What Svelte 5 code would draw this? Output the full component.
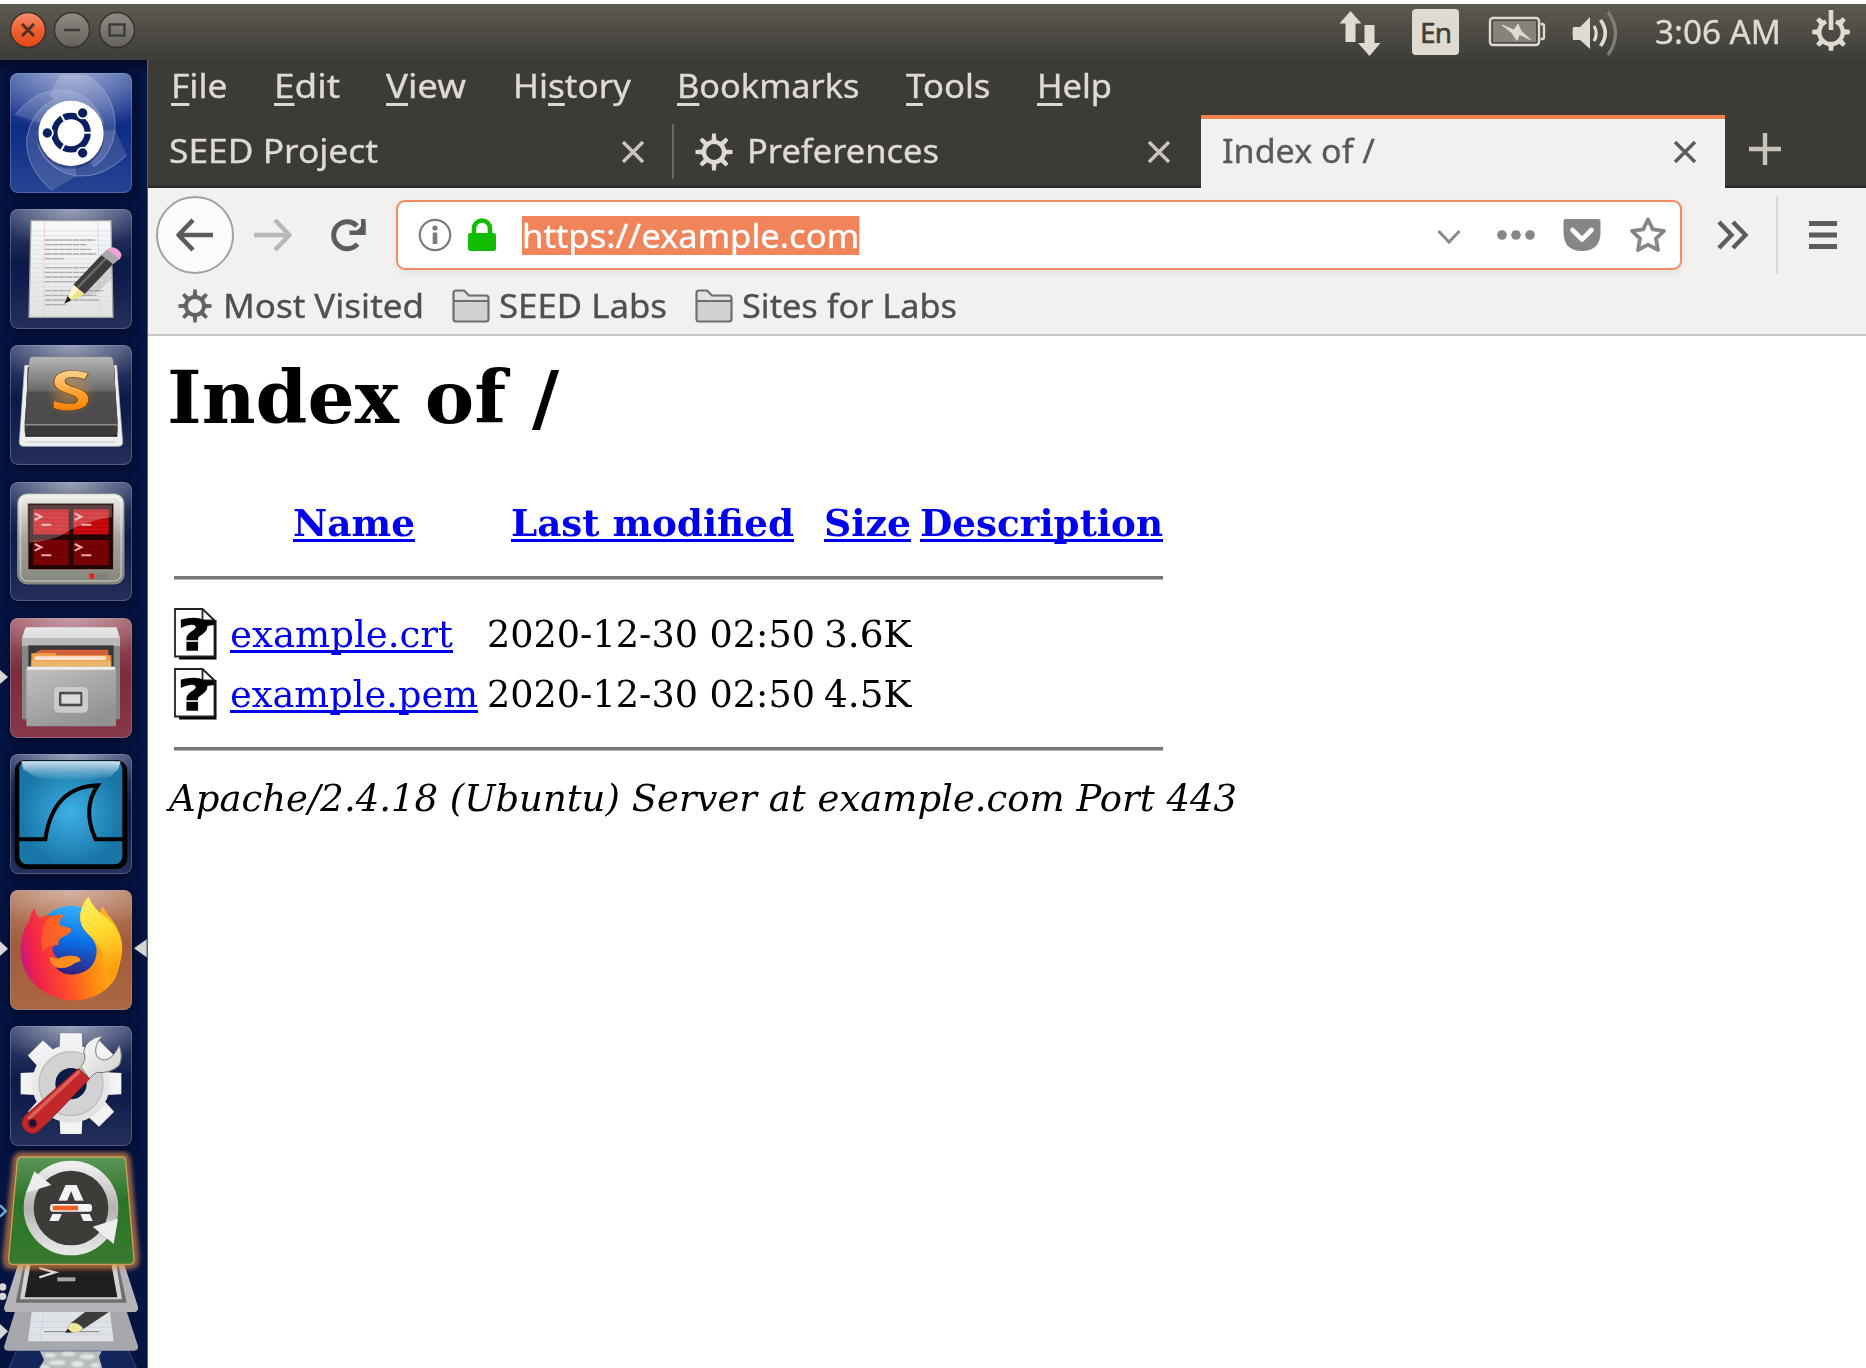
<script>
  // Stretches a label horizontally so that it takes the given width.
  function fit(node, width) {
    const natural = node.getBoundingClientRect().width;
    node.style.transform = `scaleX(${width / natural})`;
    node.style.marginRight = `${width - natural}px`;
  }

  const menus = [
    { pre: '', key: 'F', post: 'ile', w: 56.5 },
    { pre: '', key: 'E', post: 'dit', w: 66 },
    { pre: '', key: 'V', post: 'iew', w: 80 },
    { pre: 'Hi', key: 's', post: 'tory', w: 118 },
    { pre: '', key: 'B', post: 'ookmarks', w: 182.5 },
    { pre: '', key: 'T', post: 'ools', w: 84.5 },
    { pre: '', key: 'H', post: 'elp', w: 75 }
  ];
  const files = [
    { name: 'example.crt', w: 223, date: '2020-12-30 02:50', size: '3.6K' },
    { name: 'example.pem', w: 248, date: '2020-12-30 02:50', size: '4.5K' }
  ];
  const teeth = [0, 45, 90, 135, 180, 225, 270, 315];
  const paperLines = [
    [135, 285, 541], [135, 259, 555], [135, 273, 569], [135, 288, 583], [135, 192, 597],
    [135, 285, 624], [135, 270, 638], [135, 262, 652], [135, 240, 666],
    [135, 310, 693], [135, 290, 707], [135, 296, 721], [135, 200, 735]
  ];
  const panes = [
    { x: 100, y: 522, hot: true }, { x: 220, y: 522, hot: true },
    { x: 100, y: 614, hot: false }, { x: 220, y: 614, hot: false }
  ];
</script>

{#snippet gear(size)}
  <svg class="gear" width={size} height={size} viewBox="-20 -20 40 40">
    <circle r="10.6" fill="none" stroke="currentColor" stroke-width="4.6" />
    {#each teeth as a}
      <path d="M-2.6-11.5L-2-19.5H2L2.6-11.5Z" fill="currentColor" transform="rotate({a})" />
    {/each}
  </svg>
{/snippet}

{#snippet cross()}
  <svg class="cross" width="24" height="24" viewBox="0 0 24 24">
    <path d="M2 2L22 22M22 2L2 22" stroke="currentColor" stroke-width="3.4" />
  </svg>
{/snippet}

{#snippet folder()}
  <svg width="38" height="34" viewBox="0 0 38 34">
    <path d="M1.5 30V4Q1.5 1.5 4 1.5H12L17 6.5H34Q36.500 6.500 36.500 9V30Q36.500 32.500 34 32.500H4Q1.500 32.500 1.500 30Z" fill="#d2d1cf" stroke="#6f6f6e" stroke-width="2.2" />
    <path d="M2 12H36" stroke="#6f6f6e" stroke-width="2" />
    <path d="M3 3H11.500L16.500 8H35V10.800H3Z" fill="#e4e3e1" />
  </svg>
{/snippet}

<div class="screen">
  <header class="panel">
    <div class="controls">
      <svg width="36" height="38" viewBox="-18 -19 36 38">
        <circle r="17.500" fill="url(#closeG)" stroke="#37342f" stroke-width="1.500" />
        <path d="M-6-6L6 6M6-6L-6 6" stroke="#4c3024" stroke-width="3" />
      </svg>
      <svg width="36" height="38" viewBox="-18 -19 36 38">
        <circle r="17.500" fill="url(#btnG)" stroke="#37342f" stroke-width="1.500" />
        <path d="M-8 0H8" stroke="#3c3b37" stroke-width="2.400" />
      </svg>
      <svg width="36" height="38" viewBox="-18 -19 36 38">
        <circle r="17.500" fill="url(#btnG)" stroke="#37342f" stroke-width="1.500" />
        <rect x="-7.500" y="-5.500" width="15" height="11" fill="none" stroke="#3c3b37" stroke-width="2.400" />
      </svg>
    </div>
    <div class="tray">
      <svg class="net" width="42" height="48" viewBox="0 -3 42 48">
        <path d="M11.500 0L22.500 12.500H16.500V31H6.500V12.500H0.500ZM30.500 45L19 32H25.500V14H35.500V32H41.500Z" fill="#dfdbd2" />
      </svg>
      <span class="lang">En</span>
      <svg class="battery" width="58" height="34" viewBox="0 0 58 34">
        <rect x="2" y="3" width="49" height="27" rx="3" fill="#4a4843" stroke="#dfdbd2" stroke-width="2.400" />
        <path d="M52.500 9H54Q56 9 56 11V22Q56 24 54 24H52.500" fill="none" stroke="#dfdbd2" stroke-width="2.400" />
        <rect x="5" y="6" width="43" height="21" fill="#85837c" />
        <path d="M14 10L26 15L30 9L33 16L43 25L31.500 19.500L29 25.500L24 18Z" fill="#dfdbd2" stroke="#dfdbd2" stroke-width="0.800" />
      </svg>
      <svg class="volume" width="48" height="48" viewBox="0 0 48 48">
        <path d="M1 18H8L18 8V40L8 31H1Q0 24 1 18Z" fill="#dfdbd2" />
        <path d="M22 17Q26.500 24 22 32" fill="none" stroke="#dfdbd2" stroke-width="3.200" />
        <path d="M28.500 11Q38 24 28.500 37" fill="none" stroke="#dfdbd2" stroke-width="3.600" />
        <path d="M36 3Q51 24 36 46" fill="none" stroke="#807d76" stroke-width="3.200" />
      </svg>
      <span class="clock" use:fit={126}>3:06 AM</span>
      <svg class="session" width="38" height="46" viewBox="-19 -23 38 46">
        <path d="M-5-10.500A11.800 11.800 0 1 0 5-10.500" fill="none" stroke="#dfdbd2" stroke-width="4.400" />
        <path d="M0-22V-2" stroke="#dfdbd2" stroke-width="4.600" />
        {#each [45, 90, 135, 180, 225, 270, 315] as a}
          <path d="M-2.800-12.500L-2.200-18.800H2.200L2.800-12.500Z" fill="#dfdbd2" transform="rotate({a})" />
        {/each}
      </svg>
    </div>
  </header>

  <div class="desktop">
    <nav class="launcher">
      <div class="tile dash">
        <svg viewBox="30 39 366 360">
          <path d="M45 165Q110 85 190 90Q275 95 310 190L212 218Z" fill="#fff" opacity=".14" />
          <path d="M260 45Q350 100 345 210Q335 290 280 320L212 218L150 100L180 45Z" fill="#fff" opacity=".16" />
          <path d="M380 285Q310 355 230 348Q140 335 110 250L212 218L345 210Z" fill="#fff" opacity=".13" />
          <path d="M155 392Q75 320 80 235Q95 150 160 120L212 218L230 348Z" fill="#fff" opacity=".14" />
          <path d="M45 165Q110 85 190 90Q275 95 310 190M260 45Q350 100 345 210M380 285Q310 355 230 348Q150 335 115 260M155 392Q75 320 80 235Q95 150 160 120M345 210Q335 290 280 320" fill="none" stroke="#a9b9e6" stroke-width="2.500" opacity=".6" />
          <circle cx="213" cy="226" r="100" fill="#04123e" opacity=".35" />
          <circle cx="213" cy="220" r="98" fill="#fff" />
          <circle cx="213" cy="218" r="50" fill="none" stroke="#0a1f60" stroke-width="19" />
          <path d="M236 218H278M201 197L181 160M201 239L181 276" stroke="#fff" stroke-width="6" />
          <g fill="#0a1f60" stroke="#fff" stroke-width="5">
            <circle cx="142" cy="219" r="16.500" /><circle cx="248" cy="159" r="16.500" /><circle cx="248" cy="279" r="16.500" />
          </g>
        </svg>
      </div>

      <div class="tile">
        <svg viewBox="30 448 366 360">
          <path d="M93 483H333L339 773H87Z" fill="url(#paperG)" stroke="#a3a3a0" stroke-width="4" />
          {#each Array(17) as _, i}
            <path d="M96 {514 + i * 14}H333" stroke="#d3e0ea" stroke-width="2" />
          {/each}
          <path d="M133 487L131 769" stroke="#f2c6c6" stroke-width="2.500" />
          <path d="M294 487L299 769" stroke="#c6daef" stroke-width="2.500" />
          {#each paperLines as [x1, x2, y]}
            <path d="M{x1} {y}H{x2}" stroke="#acacaa" stroke-width="4" stroke-dasharray="19 2" />
          {/each}
          <path d="M235 715L335 610L333 660L290 700Z" fill="#777" opacity=".22" />
          <path d="M220 675L305 585L340 612L254 703Z" fill="#3d3d3d" />
          <path d="M233 684L318 596" stroke="#6c6c6c" stroke-width="7" />
          <path d="M304 586L322 568L358 598L340 614Z" fill="#a9a9a9" />
          <path d="M322 568Q338 556 355 570Q372 586 358 600Z" fill="#eda3d6" />
          <path d="M220 675L254 703L233 715L194 731L207 707Z" fill="#ebe08e" />
          <path d="M220 675L236 690L205 722L207 707Z" fill="#fbf7cd" />
          <path d="M203 709L214 722L193 732Z" fill="#1d1d1d" />
        </svg>
      </div>

      <div class="tile">
        <svg viewBox="30 31 366 360">
          <path d="M74 92H350L368 322Q368 335 355 335H72Q58 335 58 322Z" fill="#efefef" stroke="#bdbdbd" stroke-width="2" />
          <path d="M83 98H343L352 306H76Z" fill="#151515" />
          <path d="M98 66H328Q338 66 340 78L353 266V290Q353 303 340 303H86Q74 303 74 290V266L88 78Q89 66 98 66Z" fill="#3a3a3a" />
          <path d="M98 66H328Q338 66 340 78L353 266H74L88 78Q89 66 98 66Z" fill="url(#keyG)" />
          <path d="M76 270H351" stroke="#8d8d8d" stroke-width="5" />
          <path d="M80 322H346" stroke="#d5d5d5" stroke-width="4" />
          <ellipse cx="212" cy="172" rx="76" ry="70" fill="url(#glowG)" />
          <text x="149" y="227" textLength="126" lengthAdjust="spacingAndGlyphs" class="sublime-s">S</text>
        </svg>
      </div>

      <div class="tile">
        <svg viewBox="30 440 366 360">
          <rect x="53" y="480" width="320" height="270" rx="30" fill="#111936" opacity=".6" />
          <rect x="53" y="475" width="319" height="271" rx="28" fill="url(#monG)" stroke="#8d8e88" stroke-width="3" />
          <rect x="62" y="484" width="301" height="253" rx="20" fill="none" stroke="#fff" stroke-width="3" opacity=".6" />
          <rect x="84" y="505" width="256" height="198" fill="#240303" stroke="#97827d" stroke-width="2.500" />
          {#each panes as p}
            <rect x={p.x} y={p.y} width="106" height="75" fill={p.hot ? '#cf0a0e' : '#7a0205'} />
            {#each Array(6) as _, i}
              <path d="M{p.x} {p.y + 7 + i * 12}h106" stroke="#3c0000" stroke-width="2.500" opacity=".35" />
            {/each}
            <path d="M{p.x + 4} {p.y + 12}l20 10l-20 10M{p.x + 24} {p.y + 46}h30" fill="none" stroke="#f0a9ab" stroke-width="6" />
          {/each}
          <path d="M88 508H336V545Q240 560 185 600Q140 620 88 622Z" fill="#fff" opacity=".25" />
          <rect x="268" y="715" width="15" height="15" fill="#e8201c" />
          <rect x="289" y="712" width="34" height="21" rx="6" fill="#777872" opacity=".5" />
        </svg>
      </div>

      <div class="tile files">
        <svg viewBox="30 38 366 360">
          <path d="M66 98H360V342H66Z" fill="#868686" />
          <path d="M81 66H345Q350 66 351 70L360 98V120H66V98L75 70Q76 66 81 66Z" fill="url(#topG)" />
          <path d="M66 98H360V122H66Z" fill="#b9b9b9" />
          <rect x="85" y="120" width="256" height="64" fill="#3a3937" />
          <path d="M108 140L122 133H325V150H335V184H100Z" fill="#d2603a" />
          <path d="M94 144H165L172 150H331V184H94Z" fill="#f0a24a" />
          <path d="M104 153H318V164H104Z" fill="#fbe3d2" />
          <path d="M94 168H333V184H94Z" fill="#eab56c" />
          <path d="M79 192Q79 184 87 184H340Q348 184 348 192V363H79Z" fill="url(#drawG)" />
          <path d="M82 189H345" stroke="#eee" stroke-width="9" />
          <rect x="162" y="245" width="102" height="77" rx="14" fill="#cbcbcb" />
          <rect x="177" y="259" width="70" height="44" rx="4" fill="#4b4b4b" />
          <rect x="184" y="267" width="57" height="28" fill="#dcdcdc" />
        </svg>
      </div>

      <div class="tile">
        <svg viewBox="30 446 366 360">
          <rect x="44" y="464" width="338" height="327" rx="34" fill="#000" />
          <rect x="58" y="466" width="309" height="311" rx="24" fill="url(#sharkG)" />
          <path d="M64 468H362L355 492L330 514Q212 530 108 516L70 492Z" fill="url(#shineG)" />
          <path d="M57 702H136Q158 545 293 540Q245 610 287 702H370" fill="none" stroke="#000" stroke-width="12" />
        </svg>
      </div>

      <div class="tile firefox">
        <svg viewBox="30 30 366 360">
          <circle cx="213" cy="181" r="104" fill="url(#globeG)" />
          <path d="M62 200Q66 150 88 122Q90 100 103 86Q107 106 120 113Q140 104 157 108Q174 102 193 105Q181 115 177 124L181 138Q205 140 214 150Q213 160 183 173Q171 184 176 195Q160 195 157 206Q158 226 177 236Q195 225 222 228Q240 230 242 242Q225 247 212 257Q188 269 166 261Q184 285 220 284Q285 276 290 215Q290 185 262 160Q228 124 247 80Q252 62 266 50Q276 78 300 98Q303 88 308 80Q318 98 336 120Q366 157 367 210Q362 255 345 296Q310 350 240 361Q160 366 105 314Q60 270 62 200Z" fill="url(#foxG)" />
          <path d="M266 50Q276 78 300 98Q350 130 366 190Q367 250 335 305Q318 265 308 240Q312 214 288 190Q284 178 262 160Q228 124 247 80Q252 62 266 50Z" fill="url(#tailG)" />
          <path d="M140 118Q165 102 193 105Q181 115 177 124L181 138Q205 140 214 150Q213 160 183 173Q171 184 176 195Q150 190 128 215Q118 160 140 118Z" fill="#fb7420" opacity=".55" />
          <path d="M177 236Q195 225 222 228Q240 230 242 242Q225 247 212 257Q188 269 166 261Q150 250 148 232Z" fill="#ffa01c" opacity=".75" />
        </svg>
      </div>

      <div class="tile">
        <svg viewBox="30 438 366 360">
          <g fill="url(#cogG)">
            {#each teeth as a}
              <path d="M178 520L181 460H245L248 520Z" transform="rotate({a} 213 611)" />
            {/each}
            <circle cx="213" cy="611" r="117" />
          </g>
          <circle cx="213" cy="611" r="96" fill="#d2d2d2" stroke="#bcbcbc" stroke-width="4" />
          <circle cx="213" cy="611" r="47" fill="#0b1a45" />
          <path d="M242 560Q262 540 251 514Q258 476 308 467Q280 496 289 526Q302 546 325 537Q344 527 358 495Q370 530 358 556Q330 582 290 577Q280 582 268 596Z" fill="url(#steelG)" stroke="#777a75" stroke-width="3" />
          <path d="M236 565L269 596Q190 680 118 752Q96 771 74 750Q56 728 76 706Z" fill="#c2272a" stroke="#851416" stroke-width="2" />
          <path d="M236 576L88 714" stroke="#e36f67" stroke-width="11" stroke-linecap="round" opacity=".8" />
          <circle cx="98" cy="730" r="13" fill="#1b1437" stroke="#8d1b20" stroke-width="5" />
        </svg>
      </div>

      <svg class="stack" viewBox="0 30 441 654">
        <path d="M50 630H385L412 690H25Z" fill="#13265c" stroke="#4c5f95" stroke-width="2" />
        <path d="M120 634H305L297 650L308 690H115L132 660Z" fill="#b4bbba" />
        <g class="crumple" fill="#e3e7e5">
          <ellipse cx="150" cy="646" rx="18" ry="7" /><ellipse cx="205" cy="642" rx="22" ry="6" />
          <ellipse cx="262" cy="650" rx="24" ry="8" /><ellipse cx="172" cy="668" rx="26" ry="8" />
          <ellipse cx="232" cy="672" rx="20" ry="9" /><ellipse cx="285" cy="676" rx="14" ry="7" />
          <ellipse cx="135" cy="682" rx="14" ry="6" />
        </g>
        <path d="M45 514H380L414 618Q416 632 402 632H24Q10 632 13 618Z" fill="#a7a7ae" />
        <path d="M95 516H330L341 604H84Z" fill="#dfe2e6" />
        <path d="M131 518L121 602M98 545H330M94 562H334M90 584H338" stroke="#c8d2df" stroke-width="2.500" />
        <path d="M132 575H298" stroke="#858585" stroke-width="3" />
        <path d="M212 550L258 514H330L250 567L236 576L196 578Z" fill="#3c3c3c" />
        <path d="M212 550Q235 545 250 566L236 576L196 578Z" fill="#eee69a" />
        <path d="M196 578L203 566L216 577Z" fill="#222" />
        <path d="M55 370H372L414 500Q416 516 402 516H24Q10 516 13 500Z" fill="#b4b4b8" />
        <path d="M72 370H355L380 488H47Z" fill="#6f6f71" />
        <path d="M78 370H348L366 478H60Z" fill="#d2d2d2" />
        <path d="M92 372H334L352 472H74Z" fill="#1f1f20" />
        <path d="M118 384L165 397L118 412" fill="none" stroke="#dcdcdc" stroke-width="7" />
        <path d="M172 418H226" stroke="#a5a5a5" stroke-width="12" />
        <path d="M64 48H368Q378 48 380 60L406 355Q407 376 392 376H32Q18 376 19 355L50 60Q53 48 64 48Z" fill="none" stroke="#e08a4a" stroke-width="24" opacity=".65" class="soft" />
        <path d="M64 51H366Q375 51 377 62L402 355Q403 373 390 373H38Q25 373 26 355L52 62Q55 51 64 51Z" fill="url(#greenG)" stroke="#cda053" stroke-width="4" />
        <circle cx="213" cy="203" r="114" fill="#3d3c39" />
        <circle cx="213" cy="204" r="127" fill="none" stroke="url(#ringG)" stroke-width="30" />
        <path d="M103 94L154 135L78 158Z" fill="#ededed" />
        <path d="M354 236L341 312L278 260Z" fill="#ededed" />
        <text x="143" y="242" textLength="140" lengthAdjust="spacingAndGlyphs" class="updater-a">A</text>
        <rect x="150" y="182" width="126" height="40" fill="#3d3c39" />
        <rect x="150" y="192" width="126" height="23" rx="9" fill="#f4f4f4" />
        <rect x="158" y="197" width="76" height="14" fill="#ee6022" />
      </svg>

      <svg class="pips" viewBox="0 0 441 3924">
        <g fill="#d6d6d6">
          <path d="M0 1830L24 1851L0 1872Z" /><path d="M0 2644L24 2666L0 2688Z" />
          <path d="M440 2638V2692L402 2665Z" />
          <circle cx="8" cy="3681" r="11" /><circle cx="8" cy="3709" r="11" />
          <path d="M0 3792L24 3814L0 3838Z" />
        </g>
        <path d="M0 3436L17 3453L0 3470" fill="none" stroke="#6fb2dc" stroke-width="7" />
      </svg>
    </nav>

    <main class="window">
      <div class="menubar">
        {#each menus as m}
          <span class="label" use:fit={m.w}>{m.pre}<u>{m.key}</u>{m.post}</span>
        {/each}
      </div>

      <div class="tabs">
        <div class="tab first">
          <span class="label grow"><span use:fit={209}>SEED Project</span></span>
          {@render cross()}
        </div>
        <div class="tab second">
          {@render gear(38)}
          <span class="label grow"><span use:fit={192}>Preferences</span></span>
          {@render cross()}
        </div>
        <div class="tab active">
          <span class="label grow"><span use:fit={153}>Index of /</span></span>
          {@render cross()}
        </div>
        <svg class="plus" width="34" height="34" viewBox="0 0 34 34">
          <path d="M1 17H33M17 1V33" stroke="#c9c4bb" stroke-width="4.400" />
        </svg>
      </div>

      <div class="toolbar">
        <span class="back">
          <svg width="40" height="34" viewBox="0 0 40 34">
            <path d="M38 17H4M18 2L3.500 17L18 32" fill="none" stroke="#5c5c5b" stroke-width="4.600" stroke-linejoin="round" />
          </svg>
        </span>
        <svg class="forward" width="40" height="34" viewBox="0 0 40 34">
          <path d="M1 17H36M22 2L36.500 17L22 32" fill="none" stroke="#b9b8b6" stroke-width="4.600" stroke-linejoin="round" />
        </svg>
        <svg class="reload" width="38" height="36" viewBox="0 0 38 36">
          <path d="M28 9A13.500 13.500 0 1 0 28.500 27" fill="none" stroke="#5c5c5b" stroke-width="5" />
          <path d="M36.500 2V18H20.500V13.500H32V2Z" fill="#5c5c5b" />
          <path d="M36.500 5V18H23.500Z" fill="#5c5c5b" />
        </svg>
        <div class="urlbar">
          <svg class="info" width="34" height="34" viewBox="0 0 34 34">
            <circle cx="17" cy="17" r="15.200" fill="none" stroke="#7a7a79" stroke-width="2.200" />
            <circle cx="17" cy="10" r="2.600" fill="#7a7a79" />
            <path d="M17 14.500V26" stroke="#7a7a79" stroke-width="4.600" />
          </svg>
          <svg class="lock" width="30" height="34" viewBox="0 0 30 34">
            <path d="M7 16V10.500A8 8 0 0 1 23 10.500V16" fill="none" stroke="#12bc00" stroke-width="4.600" />
            <rect x="1" y="15" width="28" height="18" rx="2.500" fill="#12bc00" />
          </svg>
          <span class="address"><span use:fit={337}>https://example.com</span></span>
          <svg class="chev" width="24" height="16" viewBox="0 0 24 16">
            <path d="M1.500 2L12 13L22.500 2" fill="none" stroke="#8a8a89" stroke-width="3" />
          </svg>
          <svg class="dots" width="40" height="12" viewBox="0 0 40 12">
            <circle cx="6" cy="6" r="4.800" /><circle cx="20" cy="6" r="4.800" /><circle cx="34" cy="6" r="4.800" />
          </svg>
          <svg class="pocket" width="38" height="34" viewBox="0 0 38 34">
            <path d="M3 1H35Q37.500 1 37.500 4V14Q37.500 33 19 33Q0.500 33 0.500 14V4Q0.500 1 3 1Z" fill="#868685" />
            <path d="M9.500 12L19 21.500L28.500 12" fill="none" stroke="#fff" stroke-width="4.600" stroke-linecap="round" stroke-linejoin="round" />
          </svg>
          <svg class="star" width="38" height="38" viewBox="0 0 38 38">
            <path d="M19 3.500L23.800 13.300L35 14.900L27 22.600L29 34L19 28.600L9 34L11 22.600L3 14.900L14.200 13.300Z" fill="none" stroke="#868685" stroke-width="3.800" stroke-linejoin="round" />
          </svg>
        </div>
        <svg class="more" width="32" height="30" viewBox="0 0 32 30">
          <path d="M2 2L14.500 15L2 28M16 2L28.500 15L16 28" fill="none" stroke="#5c5c5b" stroke-width="4.400" />
        </svg>
        <i class="divider"></i>
        <svg class="burger" width="28" height="30" viewBox="0 0 28 30">
          <path d="M0 3.500H28M0 15H28M0 26.500H28" stroke="#5c5c5b" stroke-width="4.800" />
        </svg>
      </div>

      <div class="bookmarks">
        <span class="mark gearmark">{@render gear(34)}<span class="label" use:fit={201}>Most Visited</span></span>
        <span class="mark">{@render folder()}<span class="label" use:fit={168}>SEED Labs</span></span>
        <span class="mark">{@render folder()}<span class="label" use:fit={215}>Sites for Labs</span></span>
      </div>

      <section class="page">
        <h1><span use:fit={392}>Index of /</span></h1>
        <div class="row head">
          <span></span>
          <span class="mid"><a href="#name" use:fit={122}>Name</a></span>
          <span class="mid modified"><a href="#date" use:fit={283}>Last modified</a></span>
          <span class="mid"><a href="#size" use:fit={87}>Size</a></span>
          <span class="mid"><a href="#desc" use:fit={243}>Description</a></span>
        </div>
        <hr />
        {#each files as f}
          <div class="row">
            <svg class="fileicon" width="43" height="52" viewBox="0 0 43 52">
              <path d="M5 48H39V12H42.500V51.500H5Z" fill="#000" />
              <path d="M1 1H28.500L40.500 12.500V48.500H1Z" fill="#fff" stroke="#222" stroke-width="1.800" />
              <path d="M28.500 1V12.500H40.500" fill="none" stroke="#222" stroke-width="1.800" />
              <text x="4" y="42" textLength="32" lengthAdjust="spacingAndGlyphs" class="unknown">?</text>
              <path d="M28 12.500H40V17L33 18L28 24Z" fill="#000" />
            </svg>
            <span><a href="#file" use:fit={f.w}>{f.name}</a></span>
            <span><span use:fit={328}>{f.date}</span></span>
            <span><span use:fit={87.5}>{f.size}</span></span>
            <span></span>
          </div>
        {/each}
        <hr class="second-rule" />
        <address><span use:fit={1068}>Apache/2.4.18 (Ubuntu) Server at example.com Port 443</span></address>
      </section>
    </main>
  </div>

  <svg class="defs" width="0" height="0">
    <defs>
      <linearGradient id="closeG" x2="0" y2="1"><stop offset="0" stop-color="#f58e6c" /><stop offset=".5" stop-color="#ee5f30" /><stop offset="1" stop-color="#df4a16" /></linearGradient>
      <linearGradient id="btnG" x2="0" y2="1"><stop offset="0" stop-color="#8e8c84" /><stop offset="1" stop-color="#64625b" /></linearGradient>
      <linearGradient id="paperG" x2="0" y2="1"><stop offset="0" stop-color="#f8f8f8" /><stop offset="1" stop-color="#e2e2e2" /></linearGradient>
      <linearGradient id="keyG" x2="0" y2="1"><stop offset="0" stop-color="#b6b6b6" /><stop offset=".5" stop-color="#6b6b6b" /><stop offset=".54" stop-color="#4e4e4e" /><stop offset="1" stop-color="#4b4b4b" /></linearGradient>
      <radialGradient id="glowG"><stop offset="0" stop-color="#e8983a" stop-opacity=".6" /><stop offset="1" stop-color="#e8983a" stop-opacity="0" /></radialGradient>
      <linearGradient id="sG" x2="0" y2="1"><stop offset="0.2" stop-color="#ffd9a0" /><stop offset=".55" stop-color="#ffa22f" /><stop offset=".8" stop-color="#ff8000" /></linearGradient>
      <linearGradient id="monG" x2="0" y2="1"><stop offset="0" stop-color="#f2f2f0" /><stop offset=".5" stop-color="#a2a39c" /><stop offset="1" stop-color="#85877f" /></linearGradient>
      <linearGradient id="topG" x2="0" y2="1"><stop offset="0" stop-color="#e8e8e8" /><stop offset="1" stop-color="#d2d2d2" /></linearGradient>
      <linearGradient id="drawG" x2=".6" y2="1"><stop offset="0" stop-color="#c2c2c2" /><stop offset="1" stop-color="#929292" /></linearGradient>
      <radialGradient id="sharkG"><stop offset="0" stop-color="#3db0e6" /><stop offset="1" stop-color="#1a76a8" /></radialGradient>
      <linearGradient id="shineG" x2="0" y2="1"><stop offset="0" stop-color="#e8eef2" stop-opacity=".9" /><stop offset="1" stop-color="#9fd0e8" stop-opacity=".1" /></linearGradient>
      <linearGradient id="globeG" x1=".6" y1="0" x2=".4" y2="1"><stop offset="0" stop-color="#35b0fb" /><stop offset=".5" stop-color="#0a6fe6" /><stop offset="1" stop-color="#331a78" /></linearGradient>
      <linearGradient id="foxG" x1="0" y1=".6" x2="1" y2=".4"><stop offset="0" stop-color="#c4168a" /><stop offset=".12" stop-color="#f0204c" /><stop offset=".38" stop-color="#ff4a2a" /><stop offset=".65" stop-color="#ff8a10" /><stop offset="1" stop-color="#ffc51c" /></linearGradient>
      <linearGradient id="tailG" x2=".2" y2="1"><stop offset="0" stop-color="#fff36a" /><stop offset=".5" stop-color="#ffd92e" /><stop offset="1" stop-color="#ff9a0a" /></linearGradient>
      <linearGradient id="cogG" gradientUnits="userSpaceOnUse" x1="213" y1="460" x2="213" y2="762"><stop offset="0" stop-color="#f4f4f4" /><stop offset="1" stop-color="#dedede" /></linearGradient>
      <linearGradient id="steelG" x2="1" y2="1"><stop offset="0" stop-color="#fbfbfa" /><stop offset="1" stop-color="#cfd0cc" /></linearGradient>
      <linearGradient id="greenG" x2="0" y2="1"><stop offset="0" stop-color="#5c9558" /><stop offset=".4" stop-color="#2c7429" /><stop offset="1" stop-color="#37792f" /></linearGradient>
      <linearGradient id="ringG" x2="0" y2="1"><stop offset="0" stop-color="#efefef" /><stop offset=".5" stop-color="#b5b3b1" /><stop offset="1" stop-color="#e6e6e6" /></linearGradient>
    </defs>
  </svg>
</div>

<style>
  :global(body) { background: #fff; }
  .screen {
    width: 1866px;
    height: 1368px;
    box-sizing: border-box;
    padding-top: 4px;
    overflow: hidden;
    display: flex;
    flex-direction: column;
    background: #fff;
    font-family: "Noto Sans", "Open Sans", sans-serif;
    font-size: 32px;
    white-space: nowrap;
  }
  svg { display: block; flex: none; }
  .defs { position: absolute; }
  .panel {
    height: 56px;
    flex: none;
    display: flex;
    justify-content: space-between;
    background: linear-gradient(#5f5b51, #54514a 30%, #3e3d38);
  }
  .controls { display: flex; gap: 8.500px; padding: 7px 0 0 9.500px; }
  .tray { display: flex; align-items: center; padding-right: 16px; color: #dfdbd2; }
  .net { margin: 0 31px 0 0; }
  .lang {
    width: 47px;
    height: 46px;
    line-height: 47px;
    margin-top: -1px;
    border-radius: 4px;
    background: #dfdbd2;
    color: #3f3d39;
    font-size: 28px;
    letter-spacing: -1px;
    text-align: center;
    -webkit-text-stroke: 0.500px #3f3d39;
  }
  .battery { margin: 0 26px 0 29px; }
  .volume { margin-right: 35px; margin-top: 1px; }
  .clock { margin-top: -1px; line-height: 50px; display: inline-block; transform-origin: 0 50%; -webkit-text-stroke: 0.350px; }
  .session { margin: 0 0 0 31px; }

  .desktop { display: flex; flex: 1; min-height: 0; }
  .launcher {
    position: relative;
    width: 148px;
    flex: none;
    box-sizing: border-box;
    padding-top: 13.300px;
    display: flex;
    flex-direction: column;
    gap: 16.200px;
    background: linear-gradient(#020a26, #04133f 12px, #04133f);
    border-right: 1.500px solid #4d609a;
    overflow: hidden;
  }
  .tile {
    width: 122px;
    height: 119.900px;
    flex: none;
    margin-left: 10px;
    border-radius: 8px;
    background:
      radial-gradient(ellipse 75px 42px at 50% 0, rgba(255, 255, 255, .5), rgba(255, 255, 255, 0)),
      linear-gradient(#3a4670, #0c1a48 45%, #101d4c 60%, #25315b);
    box-shadow: inset 0 0 0 1px rgba(160, 175, 220, .35), 0 2px 8px rgba(0, 0, 20, .6);
  }
  .tile svg { width: 122px; height: 120px; }
  .dash {
    background:
      radial-gradient(ellipse 90px 60px at 50% 0, rgba(255, 255, 255, .5), rgba(255, 255, 255, 0)),
      linear-gradient(#3d57a6, #0f2c85 45%, #264493);
  }
  .files {
    background:
      radial-gradient(ellipse 80px 44px at 50% 0, rgba(255, 255, 255, .4), rgba(255, 255, 255, 0)),
      linear-gradient(#a4606c, #7a2c3c 45%, #873849);
  }
  .firefox {
    background:
      radial-gradient(ellipse 80px 44px at 50% 0, rgba(255, 255, 255, .4), rgba(255, 255, 255, 0)),
      linear-gradient(#b98266, #a05c3b 45%, #ac6743);
  }
  .stack { width: 147px; height: 218px; margin-top: -11.700px; }
  .pips { position: absolute; left: 0; top: 0; width: 147px; height: 1308px; }
  .soft { filter: blur(6px); }
  .crumple { filter: blur(3px); }
  .sublime-s { font: bold 162px "Open Sans", sans-serif; fill: url(#sG); stroke: #6b4a20; stroke-width: 2px; }
  .updater-a { font: bold 156px "Liberation Sans", sans-serif; fill: #f4f4f4; }

  .window { flex: 1; min-width: 0; display: flex; flex-direction: column; background: #fff; }
  .label { line-height: 44px; -webkit-text-stroke: 0.350px; }
  .menubar .label, .grow span, .mark .label, .address span, .page span > span, h1 span, address span, .page a {
    display: inline-block;
    transform-origin: 0 50%;
  }
  .menubar {
    height: 53px;
    flex: none;
    box-sizing: border-box;
    padding: 4px 0 0 23px;
    display: flex;
    gap: 46.400px;
    background: #3c3b37;
    color: #dfdbd2;
  }
  .menubar u { text-decoration-thickness: 2.500px; text-underline-offset: 5px; }
  .tabs {
    height: 75px;
    flex: none;
    display: flex;
    background: linear-gradient(#3c3b37 72px, #2b2a27 73px);
    color: #dfdbd2;
  }
  .tab { display: flex; align-items: center; box-sizing: border-box; }
  .grow { flex: 1; }
  .cross { color: #cbc6bd; margin-top: 2px; }
  .first { width: 526px; padding: 0 29.500px 0 21px; }
  .first::after { content: ""; width: 2px; height: 55px; margin: 2px -29px 0 27px; background: #6a6863; }
  .second { width: 527px; padding: 0 30px 0 21px; }
  .second .gear { margin: 3px 14px 0 0; }
  .active {
    width: 524px;
    margin-top: 2px;
    padding: 0 28px 6px 21px;
    border-top: 4.500px solid #f0824f;
    background: #f2f1ef;
    color: #5a5a5c;
  }
  .active .cross { color: #5c5c5b; }
  .plus { margin: 19px 0 0 23px; }

  .toolbar {
    height: 93px;
    flex: none;
    box-sizing: border-box;
    padding-left: 8px;
    display: flex;
    align-items: center;
    background: #f2f1ef;
  }
  .back {
    width: 78px;
    height: 78px;
    box-sizing: border-box;
    border: 2px solid #a2a1a0;
    border-radius: 50%;
    background: #fcfcfc;
    display: flex;
    align-items: center;
    justify-content: center;
  }
  .forward { margin-left: 18.500px; }
  .reload { margin-left: 36px; }
  .urlbar {
    width: 1286px;
    height: 70px;
    margin-left: 29.500px;
    box-sizing: border-box;
    border: 2.500px solid #f28b62;
    border-radius: 9px;
    background: #fff;
    box-shadow: 0 3px 8px rgba(0, 0, 0, .07);
    display: flex;
    align-items: center;
    padding-left: 20px;
  }
  .lock { margin: 0 24.500px 0 15px; }
  .address { flex: 1; color: #fff; line-height: 39px; margin-top: 1px; -webkit-text-stroke: 0.350px; }
  .address span { background: #f1845a; line-height: 39px; }
  .chev { margin: 5px 35px 0 0; }
  .dots { fill: #868685; margin-right: 27px; }
  .pocket { margin-right: 28px; }
  .star { margin-right: 13.500px; }
  .more { margin-left: 35px; }
  .divider { width: 2px; height: 78px; margin: 0 31px 0 27px; background: #d9d8d6; }

  .bookmarks {
    height: 55px;
    flex: none;
    box-sizing: border-box;
    padding: 0 0 4px 30px;
    border-bottom: 2px solid #c9c8c6;
    display: flex;
    align-items: center;
    gap: 28px;
    background: #f2f1ef;
    color: #4f4f51;
  }
  .mark { display: flex; align-items: center; gap: 9px; }
  .mark .label { margin-top: 0; }
  .gearmark { gap: 11px; }
  .bookmarks .gear { color: #646463; }

  .page {
    flex: 1;
    padding: 18px 0 0 20.500px;
    color: #000;
    font-family: "DejaVu Serif", serif;
    font-size: 36.500px;
  }
  h1 { margin: 0 0 0 -1.500px; font-size: 73px; line-height: 86px; }
  .row {
    height: 60px;
    margin-left: 5px;
    display: grid;
    grid-template-columns: 47px 248.300px 327.500px 87px 243px;
    column-gap: 9.300px;
    align-items: center;
    line-height: 43px;
  }
  .head { height: 43px; margin-top: 62px; font-weight: bold; }
  .mid { text-align: center; }
  .modified { padding-left: 2px; }
  a { color: #0000ee; text-decoration-thickness: 2.500px; text-underline-offset: 3px; text-decoration-skip-ink: none; }
  hr {
    width: 989px;
    height: 4px;
    margin: 31px 0 24px 5px;
    border: 0;
    background: linear-gradient(#777, #777 2.500px, #cfcfcf);
  }
  .second-rule { margin: 22.500px 0 26.500px 5px; }
  address { line-height: 43px; }
  .fileicon { overflow: visible; }
  .unknown { font: bold 43px "DejaVu Sans", sans-serif; stroke: #000; stroke-width: 1.500px; }
</style>
